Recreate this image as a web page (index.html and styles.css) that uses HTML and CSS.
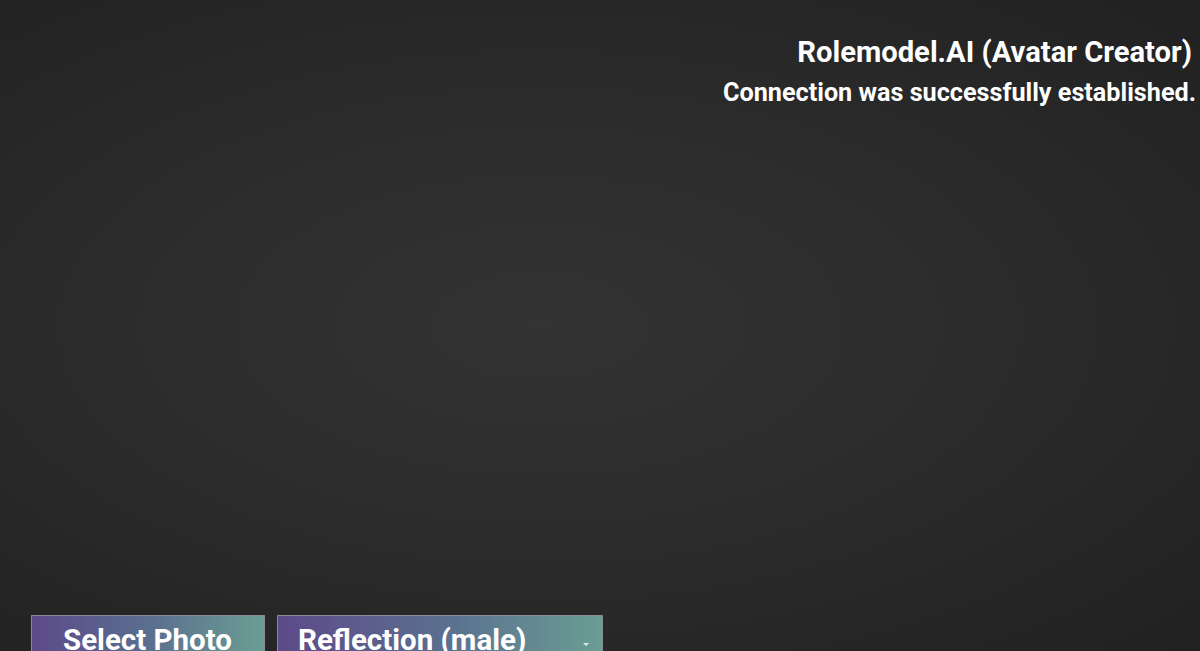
FILE: index.html
```html
<!DOCTYPE html>
<html>
<head>
<meta charset="utf-8">
<link rel="stylesheet" href="styles.css">
</head>
<body>
<div class="page">
  <header class="status">
    <div class="title">Rolemodel.AI (Avatar Creator)</div>
    <div class="message">Connection was successfully established.</div>
  </header>
  <div class="spacer"></div>
  <div class="controls">
    <div class="btn photo"><span>Select Photo</span></div>
    <div class="btn select">
      <span>Reflection (male)</span>
      <span class="arrow"></span>
    </div>
  </div>
</div>
</body>
</html>
```
FILE: styles.css
```css
html, body {
  margin: 0;
  padding: 0;
  height: 100%;
  overflow: hidden;
}
body {
  background: radial-gradient(ellipse at 45% 50%, #333333 0%, #2c2c2c 45%, #212121 100%);
  font-family: Roboto, "Liberation Sans", sans-serif;
  color: #ffffff;
}
.page {
  height: 651px;
  display: flex;
  flex-direction: column;
}
.status {
  display: flex;
  flex-direction: column;
  align-items: flex-end;
  padding: 33px 6px 0 0;
  font-weight: 700;
}
.title {
  font-size: 29.2px;
  line-height: 38px;
  margin-right: 2px;
}
.message {
  font-size: 25.2px;
  line-height: 40px;
  margin-top: 2px;
  margin-right: -2px;
}
.spacer { flex: 1; }
.controls {
  display: flex;
  gap: 12px;
  padding-left: 31px;
  height: 36px;
}
.btn {
  box-sizing: border-box;
  height: 60px;
  border: 1px solid #8a8a96;
  border-bottom: none;
  background: linear-gradient(90deg, #5d4a8a 0%, #5a6e8f 50%, #6a9e94 100%);
  color: #ffffff;
  font-weight: 700;
  font-size: 29.5px;
  line-height: 33px;
  display: flex;
  align-items: flex-start;
  border-radius: 1px;
  white-space: nowrap;
}
.photo {
  width: 234px;
  padding: 8px 0 0 31px;
}
.select {
  width: 326px;
  justify-content: space-between;
  padding: 8px 13px 0 20px;
}
.arrow {
  width: 0;
  height: 0;
  border-left: 3px solid transparent;
  border-right: 3px solid transparent;
  border-top: 3px solid #e6e6e6;
  margin-top: 19px;
}
```
